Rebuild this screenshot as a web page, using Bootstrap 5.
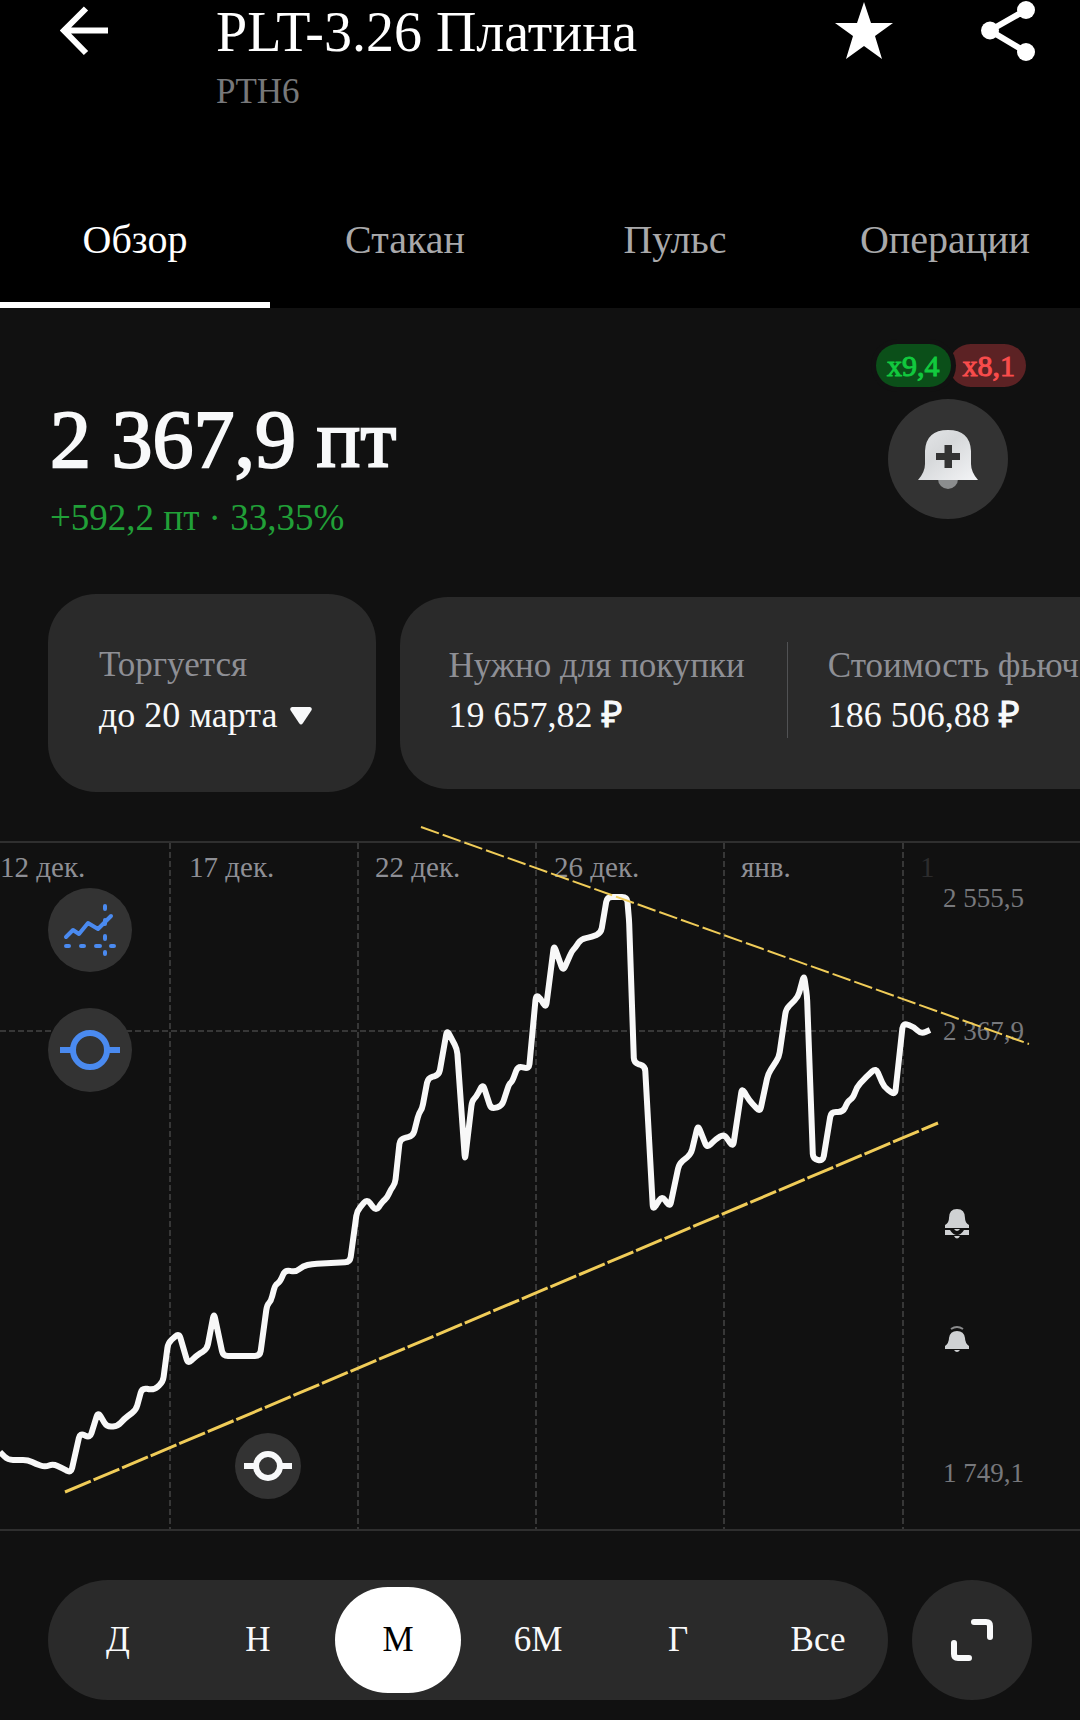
<!DOCTYPE html>
<html lang="ru" data-bs-theme="dark">
<head>
<meta charset="utf-8">
<meta name="viewport" content="width=device-width, initial-scale=1">
<title>PLT-3.26 Платина</title>
<link href="https://cdn.jsdelivr.net/npm/bootstrap@5.3.0/dist/css/bootstrap.min.css" rel="stylesheet">
<style>
  body { background: #111; color: #f8f9fa; font-family: "Liberation Serif", serif; overflow-x: hidden; }
  button { font-family: inherit; color: inherit; border: 0; background: none; padding: 0; }
  svg { display: block; }
  .topbar { background: #000; }
  .topbar-row { height: 176px; padding: 0 44px 0 60px; }
  .back-btn { margin: 6px 107px 0 0; }
  .title-text { font-size: 56px; line-height: 64px; color: #fff; }
  .ticker-text { font-size: 35px; line-height: 40px; color: #77787a; }
  .top-actions { gap: 86px; }
  .tab-link { padding: 40px 0 38px; font-size: 40px; line-height: 48px; color: #a9a9ab; text-align: center; text-decoration: none; border-bottom: 6px solid transparent; }
  .tab-link.active { color: #fff; border-color: #fff; }
  .quote { padding: 36px 54px 0 50px; }
  .quote-main { padding-top: 48px; }
  .price-text { font-size: 82px; line-height: 96px; -webkit-text-stroke: 2px currentColor; }
  .change-text { font-size: 37px; line-height: 44px; color: #21a038; }
  .leverage { height: 43px; gap: 4px; font-size: 30px; line-height: 43px; -webkit-text-stroke: 1px currentColor; }
  .lev { border-radius: 22px; padding: 0 11px; }
  .lev-up { background: #0b4f19; color: #12c93e; box-shadow: 0 0 0 5px #111; position: relative; z-index: 1; }
  .lev-down { background: #5c2224; color: #f94c4c; margin-left: -6px; padding-left: 14px; }
  .alert-btn { width: 120px; height: 120px; margin: 12px 18px 0 0; }
  .round-btn { background: #333; border-radius: 50%; display: flex; align-items: center; justify-content: center; }
  .facts { padding-left: 48px; gap: 24px; margin-top: 54px; overflow: hidden; }
  .fact-box { background: #2a2a2a; border-radius: 48px; font-size: 36px; white-space: nowrap; }
  .fact-date { padding: 45px 64px 51px 51px; line-height: 51px; }
  .fact-date-value { gap: 12px; }
  .fact-money { padding: 45px 0 51px 49px; line-height: 48px; height: 192px; flex: 0 0 auto; }
  .fact-label { color: #8e8f95; font-size: 35px; }
  .fact-item + .fact-item { border-left: 1px solid #515254; margin-left: 42px; padding-left: 40px; }
  .rub { font-family: "Noto Sans", sans-serif; -webkit-text-stroke: 1px currentColor; }
  .chart-area { margin-top: 49px; border: solid #2f2f2f; border-width: 2px 0; }
  .chart-svg { width: 100%; height: auto; overflow: visible; }
  .date-label { font-size: 29px; fill: #8e8f95; }
  .price-label { font-size: 27px; fill: #77787c; }
  .chart-tools { position: absolute; left: 48px; top: 45px; gap: 36px; }
  .tool-btn { width: 84px; height: 84px; }
  .marker-btn { position: absolute; left: 235px; bottom: 30px; width: 66px; height: 66px; }
  .period-row { padding: 49px 48px 19px; gap: 24px; }
  .period-bar { background: #2a2a2a; border-radius: 60px; height: 120px; padding: 7px 0; font-size: 35px; }
  .period-btn { margin: 0 7px; border-radius: 53px; }
  .period-btn.active { background: #fff; color: #000; }
  .expand-btn { background: #2a2a2a; width: 120px; height: 120px; flex: none; }
</style>
<script src="https://cdn.jsdelivr.net/npm/bootstrap@5.3.0/dist/js/bootstrap.bundle.min.js"></script>
</head>
<body>
<header class="topbar">
  <div class="topbar-row d-flex align-items-start">
    <button class="back-btn" aria-label="Назад">
      <svg width="49" height="50" viewBox="0 0 49 50" fill="none" stroke="#fff" stroke-width="6"><path d="M48 24.500H5M26 2.500L4 24.500L26 47"/></svg>
    </button>
    <div class="flex-grow-1">
      <h1 class="title-text fw-normal mb-2">PLT-3.26 Платина</h1>
      <div class="ticker-text">PTH6</div>
    </div>
    <div class="top-actions d-flex">
      <button aria-label="В избранное">
        <svg width="60" height="62" viewBox="0 0 60 62" fill="#fff"><path d="M30 2L37 23H59L41 36L48 59L30 46L12 59L19 36L1 23H23Z"/></svg>
      </button>
      <button aria-label="Поделиться">
        <svg width="56" height="62" viewBox="0 0 56 62" fill="#fff"><path d="M46 10L10 30.500L46 52" fill="none" stroke="#fff" stroke-width="6"/><circle cx="46" cy="10" r="9"/><circle cx="10" cy="30.500" r="9"/><circle cx="46" cy="52" r="9"/></svg>
      </button>
    </div>
  </div>
  <nav class="row g-0">
    <a class="tab-link col-3 active" href="#" aria-current="page">Обзор</a>
    <a class="tab-link col-3" href="#">Стакан</a>
    <a class="tab-link col-3" href="#">Пульс</a>
    <a class="tab-link col-3" href="#">Операции</a>
  </nav>
</header>

<main>
  <section class="quote d-flex justify-content-between">
    <div class="quote-main">
      <div class="price-text mb-2">2 367,9 пт</div>
      <div class="change-text">+592,2 пт · 33,35%</div>
    </div>
    <div class="d-flex flex-column align-items-end">
      <div class="leverage d-flex"><span class="lev lev-up">x9,4</span><span class="lev lev-down">x8,1</span></div>
      <button class="alert-btn round-btn" aria-label="Создать уведомление">
        <svg width="60" height="60" viewBox="0 0 60 60">
          <defs><linearGradient id="bellFill" x2="1" y2="1"><stop stop-color="#e4e6e8"/><stop offset=".4" stop-color="#d6d8da"/><stop offset="1" stop-color="#f4f5f7"/></linearGradient></defs>
          <circle cx="30" cy="50" r="10" fill="#8b8d8e"/>
          <path d="M0 51Q7 43 7 35V22Q8 1 30 1T53 22V35Q53 43 60 51Z" fill="url(#bellFill)"/>
          <path d="M26.500 16H34V24H42V31H34V39H26.500V31H18V24H26.500Z" fill="#333"/>
        </svg>
      </button>
    </div>
  </section>

  <section class="facts d-flex align-items-center">
    <button class="fact-box fact-date text-start">
      <span class="fact-label d-block">Торгуется</span>
      <span class="fact-date-value d-flex align-items-center">до 20 марта
        <svg width="22" height="18" viewBox="0 0 22 18" fill="#f8f9fa"><path d="M2 0H20Q23 1 21 4L13 16Q11 19 9 16L1 4Q-1 1 2 0Z"/></svg>
      </span>
    </button>
    <div class="fact-box fact-money d-flex">
      <div class="fact-item"><div class="fact-label">Нужно для покупки</div><div>19 657,82 <span class="rub">₽</span></div></div>
      <div class="fact-item"><div class="fact-label">Стоимость фьючерса</div><div>186 506,88 <span class="rub">₽</span></div></div>
    </div>
  </section>

  <section class="chart-area position-relative">
    <svg class="chart-svg" viewBox="0 844 1080 686" role="img" aria-label="График цены за месяц">
      <g stroke="#373737" stroke-width="2" stroke-dasharray="6 3">
        <path d="M170 844V1530M358 844V1530M536 844V1530M724 844V1530M903 844V1530M0 1032H903"/>
      </g>
      <g class="date-label">
        <text x="0" y="878">12 дек.</text><text x="189" y="878">17 дек.</text><text x="375" y="878">22 дек.</text>
        <text x="554" y="878">26 дек.</text><text x="741" y="878">янв.</text><text x="920" y="878" fill="#2c2c2d">1</text>
      </g>
      <g class="price-label">
        <text x="943" y="908">2 555,5</text><text x="943" y="1041">2 367,9</text><text x="943" y="1483">1 749,1</text>
      </g>
      <path id="priceLine" fill="none" stroke="#f8f8f8" stroke-width="6" stroke-linejoin="round"/>
      <path d="M421 828L1029 1045" stroke="#f0cc58" stroke-width="2" stroke-dasharray="19 4"/>
      <path d="M65 1493L938 1124" stroke="#f0cc58" stroke-width="3" stroke-dasharray="28 3"/>
      <g fill="#cfd1d3">
        <path d="M945 1229V1226Q949 1224 949 1219Q949 1210 957 1210T965 1219Q965 1224 969 1226V1229ZM954 1230H960Q957 1234 954 1230ZM945 1231H950Q953 1236 957 1236T964 1231H969V1236H945ZM954 1237H960Q957 1242 954 1237Z"/>
        <path d="M945 1350V1347Q949 1344 949 1339Q950 1332 957 1332T965 1339Q965 1344 969 1347V1350ZM954 1351H960Q957 1355 954 1351Z"/>
        <path d="M951 1330Q957 1326 963 1330" fill="none" stroke="#8b8c8d" stroke-width="2"/>
      </g>
    </svg>
    <div class="chart-tools d-flex flex-column">
      <button class="tool-btn round-btn" aria-label="Индикаторы">
        <svg width="54" height="54" viewBox="0 0 54 54" fill="none" stroke="#4a8af0" stroke-width="4" stroke-linecap="round" stroke-linejoin="round"><path d="M3 34L10 27L16 31L25 20L35 26L48 13M42 3V6M42 17V21M42 33V36M42 49V51M3 43H6M18 43H21M33 43H37M48 43H51"/></svg>
      </button>
      <button class="tool-btn round-btn" aria-label="Уровень">
        <svg width="60" height="44" viewBox="0 0 60 44" fill="none" stroke="#4a8af0" stroke-width="6"><circle cx="30" cy="22" r="17"/><path d="M0 22H13M47 22H60"/></svg>
      </button>
    </div>
    <button class="marker-btn round-btn" aria-label="Событие">
      <svg width="48" height="34" viewBox="0 0 48 34" fill="none" stroke="#f8f9fa" stroke-width="6"><circle cx="24" cy="17" r="12"/><path d="M0 17H12M36 17H48"/></svg>
    </button>
  </section>

  <section class="period-row d-flex">
    <div class="period-bar d-flex flex-grow-1" role="group" aria-label="Период">
      <button class="period-btn flex-fill w-100">Д</button>
      <button class="period-btn flex-fill w-100">Н</button>
      <button class="period-btn flex-fill w-100 active" aria-pressed="true">М</button>
      <button class="period-btn flex-fill w-100">6М</button>
      <button class="period-btn flex-fill w-100">Г</button>
      <button class="period-btn flex-fill w-100">Все</button>
    </div>
    <button class="round-btn expand-btn" aria-label="Развернуть">
      <svg width="44" height="44" viewBox="0 0 44 44" fill="none" stroke="#f8f9fa" stroke-width="6" stroke-linecap="round" stroke-linejoin="round"><path d="M24 4H36Q40 4 40 8V19M4 25V36Q4 40 8 40H19"/></svg>
    </button>
  </section>
</main>
<script>
  // Chart samples: x, y pairs in viewBox units
  const samples = [[0,1453],[8,1461],[28,1461],[36,1465],[45,1468],[53,1465],[62,1469],[71,1474],[80,1434],[90,1439],[98,1413],[107,1428],[118,1427],[124,1420],[136,1411],[142,1389],[154,1391],[163,1383],[168,1344],[179,1334],[188,1365],[196,1357],[207,1350],[214,1314],[223,1357],[260,1357],[267,1306],[271,1302],[275,1286],[280,1283],[285,1271],[296,1273],[303,1267],[312,1265],[350,1263],[357,1212],[367,1200],[376,1212],[383,1202],[387,1199],[391,1190],[395,1185],[400,1140],[413,1137],[419,1114],[422,1110],[428,1079],[439,1076],[447,1031],[457,1050],[465,1161],[472,1102],[476,1098],[483,1085],[491,1110],[502,1107],[509,1085],[512,1083],[518,1067],[529,1070],[536,996],[540,999],[546,1009],[554,946],[563,972],[572,952],[575,949],[581,940],[592,938],[601,934],[607,898],[627,898],[629,920],[634,1064],[645,1067],[653,1211],[662,1197],[670,1208],[679,1165],[691,1155],[698,1126],[707,1149],[716,1140],[724,1135],[733,1148],[742,1089],[749,1101],[760,1113],[768,1075],[779,1058],[786,1010],[798,998],[804,976],[807,997],[813,1160],[823,1162],[831,1113],[843,1113],[848,1102],[853,1099],[857,1088],[866,1078],[876,1069],[884,1088],[895,1096],[903,1024],[914,1028],[921,1035],[930,1031]];
  const RADIUS = 5;
  const toward = (from, to) => {
    const dx = to[0] - from[0], dy = to[1] - from[1], len = Math.hypot(dx, dy);
    const k = Math.min(RADIUS, len / 2) / len;
    return `${(from[0] + dx * k).toFixed(1)} ${(from[1] + dy * k).toFixed(1)}`;
  };
  let d = `M${samples[0].join(' ')}`;
  for (let i = 1; i < samples.length - 1; i++) {
    d += `L${toward(samples[i], samples[i - 1])}Q${samples[i].join(' ')} ${toward(samples[i], samples[i + 1])}`;
  }
  document.getElementById('priceLine').setAttribute('d', d + `L${samples.at(-1).join(' ')}`);
</script>
</body>
</html>
